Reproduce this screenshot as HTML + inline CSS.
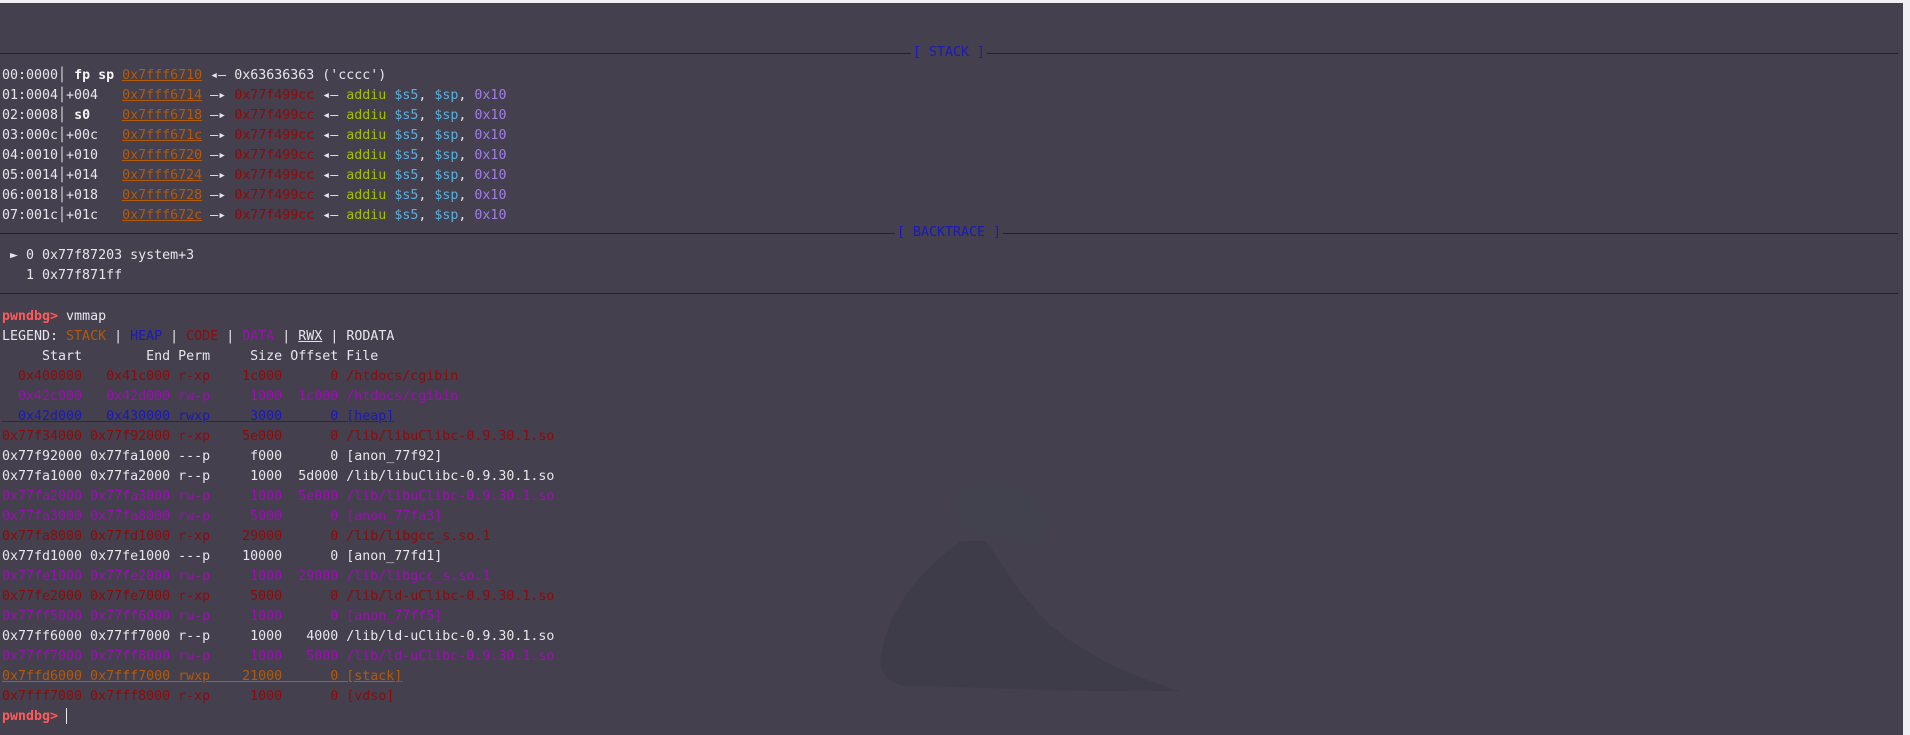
<!DOCTYPE html>
<html><head><meta charset="utf-8"><style>
html,body{margin:0;padding:0;}
body{width:1910px;height:735px;background:#f0f0f4;position:relative;overflow:hidden;}
#term{position:absolute;left:0;top:3px;width:1903px;height:732px;background:#44404e;}
.l{position:absolute;left:2px;white-space:pre;font-family:"DejaVu Sans Mono","Liberation Mono",monospace;font-size:13.3px;line-height:20px;height:20px;color:#e6e6ea;margin-top:2px;}
.sep{position:absolute;left:0;width:1898px;height:1px;background:#1010b0;}
.lab{position:absolute;white-space:pre;font-family:"DejaVu Sans Mono","Liberation Mono",monospace;font-size:13.3px;line-height:20px;color:#1a1ab8;background:#44404e;padding:0 2px;transform:translateX(-50%);}
.st{color:#b35a0a;text-decoration:underline;}
.stk{color:#b35a0a;}
.cd{color:#8e0a0a;}
.dt{color:#9a10b0;}
.hp{color:#1a1ab8;}
.ad{color:#a0c000;}
.rg{color:#5ab0e0;}
.nm{color:#a07ee8;}
.b{font-weight:bold;color:#f4f4f4;}
.pr{color:#ff5a5a;font-weight:bold;}
.u{text-decoration:underline;}
</style></head><body>
<div id="term">
<svg style="position:absolute;left:0;top:0" width="1903" height="732">
<g fill="#3f3c49">
<ellipse cx="995" cy="505" rx="40" ry="26" fill="#42424f"/>
<ellipse cx="1025" cy="522" rx="22" ry="18" fill="#42424f"/>
<path d="M962 538 C920 565 885 610 880 660 C885 680 900 685 920 683 C1000 685 1100 690 1180 688 C1120 670 1060 640 1030 600 C1005 570 995 548 985 538 Z"/>
</g>
</svg>
<div class="sep" style="top:50px"></div><div class="lab" style="top:40px;left:949px">[ STACK ]</div>
<div class="l" style="top:61px">00:0000│ <span class="b">fp sp</span> <span class="st">0x7fff6710</span> ◂— 0x63636363 ('cccc')</div>
<div class="l" style="top:81px">01:0004│+004   <span class="st">0x7fff6714</span> —▸ <span class="cd">0x77f499cc</span> ◂— <span class="ad">addiu</span> <span class="rg">$s5</span>, <span class="rg">$sp</span>, <span class="nm">0x10</span></div>
<div class="l" style="top:101px">02:0008│ <span class="b">s0</span>    <span class="st">0x7fff6718</span> —▸ <span class="cd">0x77f499cc</span> ◂— <span class="ad">addiu</span> <span class="rg">$s5</span>, <span class="rg">$sp</span>, <span class="nm">0x10</span></div>
<div class="l" style="top:121px">03:000c│+00c   <span class="st">0x7fff671c</span> —▸ <span class="cd">0x77f499cc</span> ◂— <span class="ad">addiu</span> <span class="rg">$s5</span>, <span class="rg">$sp</span>, <span class="nm">0x10</span></div>
<div class="l" style="top:141px">04:0010│+010   <span class="st">0x7fff6720</span> —▸ <span class="cd">0x77f499cc</span> ◂— <span class="ad">addiu</span> <span class="rg">$s5</span>, <span class="rg">$sp</span>, <span class="nm">0x10</span></div>
<div class="l" style="top:161px">05:0014│+014   <span class="st">0x7fff6724</span> —▸ <span class="cd">0x77f499cc</span> ◂— <span class="ad">addiu</span> <span class="rg">$s5</span>, <span class="rg">$sp</span>, <span class="nm">0x10</span></div>
<div class="l" style="top:181px">06:0018│+018   <span class="st">0x7fff6728</span> —▸ <span class="cd">0x77f499cc</span> ◂— <span class="ad">addiu</span> <span class="rg">$s5</span>, <span class="rg">$sp</span>, <span class="nm">0x10</span></div>
<div class="l" style="top:201px">07:001c│+01c   <span class="st">0x7fff672c</span> —▸ <span class="cd">0x77f499cc</span> ◂— <span class="ad">addiu</span> <span class="rg">$s5</span>, <span class="rg">$sp</span>, <span class="nm">0x10</span></div>
<div class="sep" style="top:230px"></div><div class="lab" style="top:220px;left:949px">[ BACKTRACE ]</div>
<div class="l" style="top:241px"> ► 0 0x77f87203 system+3</div>
<div class="l" style="top:261px">   1 0x77f871ff</div>
<div class="sep" style="top:290px"></div>
<div class="l" style="top:302px"><span class="pr">pwndbg&gt;</span> vmmap</div>
<div class="l" style="top:322px">LEGEND: <span class="stk">STACK</span> | <span class="hp">HEAP</span> | <span class="cd">CODE</span> | <span class="dt">DATA</span> | <span class="u">RWX</span> | RODATA</div>
<div class="l" style="top:342px">     Start        End Perm     Size Offset File</div>
<div class="l cd" style="top:362px">  0x400000   0x41c000 r-xp    1c000      0 /htdocs/cgibin</div>
<div class="l dt" style="top:382px">  0x42c000   0x42d000 rw-p     1000  1c000 /htdocs/cgibin</div>
<div class="l hp u" style="top:402px">  0x42d000   0x430000 rwxp     3000      0 [heap]</div>
<div class="l cd" style="top:422px">0x77f34000 0x77f92000 r-xp    5e000      0 /lib/libuClibc-0.9.30.1.so</div>
<div class="l" style="top:442px">0x77f92000 0x77fa1000 ---p     f000      0 [anon_77f92]</div>
<div class="l" style="top:462px">0x77fa1000 0x77fa2000 r--p     1000  5d000 /lib/libuClibc-0.9.30.1.so</div>
<div class="l dt" style="top:482px">0x77fa2000 0x77fa3000 rw-p     1000  5e000 /lib/libuClibc-0.9.30.1.so</div>
<div class="l dt" style="top:502px">0x77fa3000 0x77fa8000 rw-p     5000      0 [anon_77fa3]</div>
<div class="l cd" style="top:522px">0x77fa8000 0x77fd1000 r-xp    29000      0 /lib/libgcc_s.so.1</div>
<div class="l" style="top:542px">0x77fd1000 0x77fe1000 ---p    10000      0 [anon_77fd1]</div>
<div class="l dt" style="top:562px">0x77fe1000 0x77fe2000 rw-p     1000  29000 /lib/libgcc_s.so.1</div>
<div class="l cd" style="top:582px">0x77fe2000 0x77fe7000 r-xp     5000      0 /lib/ld-uClibc-0.9.30.1.so</div>
<div class="l dt" style="top:602px">0x77ff5000 0x77ff6000 rw-p     1000      0 [anon_77ff5]</div>
<div class="l" style="top:622px">0x77ff6000 0x77ff7000 r--p     1000   4000 /lib/ld-uClibc-0.9.30.1.so</div>
<div class="l dt" style="top:642px">0x77ff7000 0x77ff8000 rw-p     1000   5000 /lib/ld-uClibc-0.9.30.1.so</div>
<div class="l stk u" style="top:662px">0x7ffd6000 0x7fff7000 rwxp    21000      0 [stack]</div>
<div class="l cd" style="top:682px">0x7fff7000 0x7fff8000 r-xp     1000      0 [vdso]</div>
<div class="l" style="top:702px"><span class="pr">pwndbg&gt;</span> <span style="display:inline-block;width:1px;height:16px;background:#eee;vertical-align:middle"></span></div>
</div>
</body></html>
